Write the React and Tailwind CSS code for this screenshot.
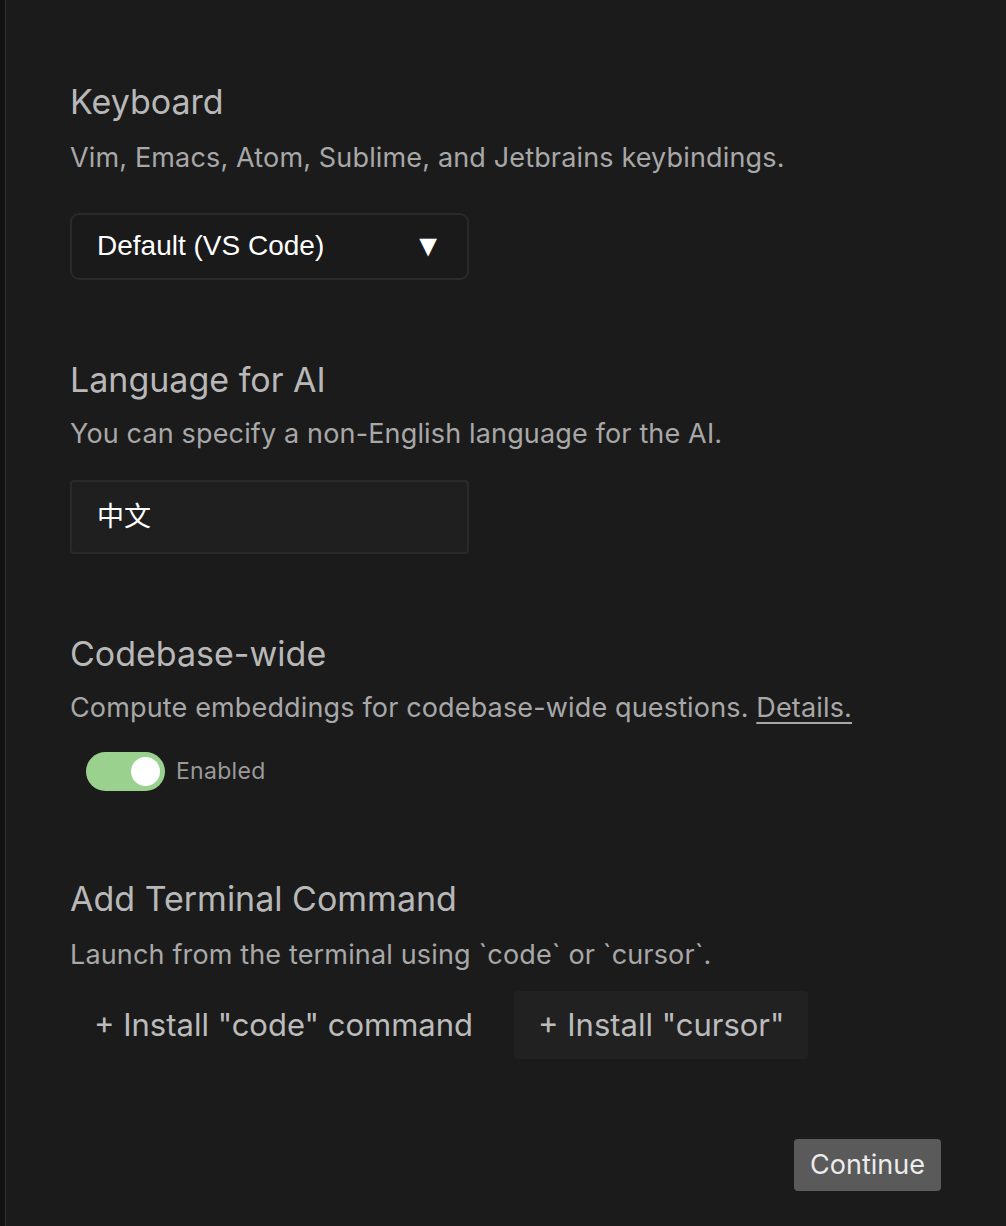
import { useState } from 'react';

const font = { fontFamily: 'Inter, "Noto Sans", sans-serif' };

const Section = ({ title, children }) => (
  <div>
    <h2 className="text-[34px] leading-[40px] text-[#b8b8b8] font-normal">{title}</h2>
    {children}
  </div>
);

const App = () => {
  const [enabled, setEnabled] = useState(true);

  return (
    <div
      className="min-h-screen bg-[#1b1b1b] border-l-[5px] border-[#121212] shadow-[inset_1px_0_0_#303030] pl-[65px] pr-[65px] pt-[82px] pb-[35px] flex flex-col"
      style={font}
    >
      <Section title="Keyboard">
        <p className="mt-[20px] text-[27px] leading-[32px] tracking-[0.15px] text-[#a8a8a8]">
          Vim, Emacs, Atom, Sublime, and Jetbrains keybindings.
        </p>
        <div className="mt-[39px] w-[399px] h-[67px] rounded-[9px] border-2 border-[#2a2a2a] bg-[#1a1a1a] flex items-center justify-between pl-[25px] pr-[24px] text-white text-[28px] font-['Liberation_Sans',Arial,sans-serif]">
          <span className="-mt-[2px]">Default (VS Code)</span>
          <span className="text-[30px] -mt-[2px]">▼</span>
        </div>
      </Section>

      <div className="mt-[80px]">
        <Section title="Language for AI">
          <p className="mt-[18px] text-[27px] leading-[32px] tracking-[0.15px] text-[#a8a8a8]">
            You can specify a non-English language for the AI.
          </p>
          <div className="mt-[30px] w-[399px] h-[74px] rounded-[4px] border-2 border-[#2a2a2a] bg-[#1f1f1f] flex items-center pl-[25px] text-white text-[27px] font-['Liberation_Sans','Noto_Sans_CJK_SC',sans-serif]">
            中文
          </div>
        </Section>
      </div>

      <div className="mt-[80px]">
        <Section title="Codebase-wide">
          <p className="mt-[18px] text-[27px] leading-[32px] tracking-[0.15px] text-[#a8a8a8]">
            Compute embeddings for codebase-wide questions.{' '}
            <span className="underline underline-offset-[5px] decoration-[2px]">Details.</span>
          </p>
          <div className="mt-[28px] ml-[16px] flex items-center gap-[11px]">
            <button
              onClick={() => setEnabled(!enabled)}
              className={`w-[79px] h-[39px] rounded-full flex items-center px-[5px] ${enabled ? 'bg-[#9bd18e] justify-end' : 'bg-[#444] justify-start'}`}
            >
              <span className="w-[29px] h-[29px] rounded-full bg-white" />
            </button>
            <span className="text-[23px] tracking-[0.3px] text-[#9a9a9a]">Enabled</span>
          </div>
        </Section>
      </div>

      <div className="mt-[88px]">
        <Section title="Add Terminal Command">
          <p className="mt-[20px] text-[27px] leading-[32px] tracking-[0.15px] text-[#a8a8a8]">
            Launch from the terminal using `code` or `cursor`.
          </p>
          <div className="mt-[20px] flex gap-[17px]">
            <button className="h-[68px] px-[24px] text-[31px] text-[#bcbcbc] rounded-[4px]">
              + Install "code" command
            </button>
            <button className="h-[68px] px-[24px] text-[31px] text-[#bcbcbc] bg-[#212121] rounded-[4px]">
              + Install "cursor"
            </button>
          </div>
        </Section>
      </div>

      <div className="mt-[80px] flex justify-end">
        <button className="h-[52px] px-[16px] rounded-[4px] bg-[#5a5a5a] text-[#ececec] text-[27px]">
          Continue
        </button>
      </div>
    </div>
  );
};

export default App;
